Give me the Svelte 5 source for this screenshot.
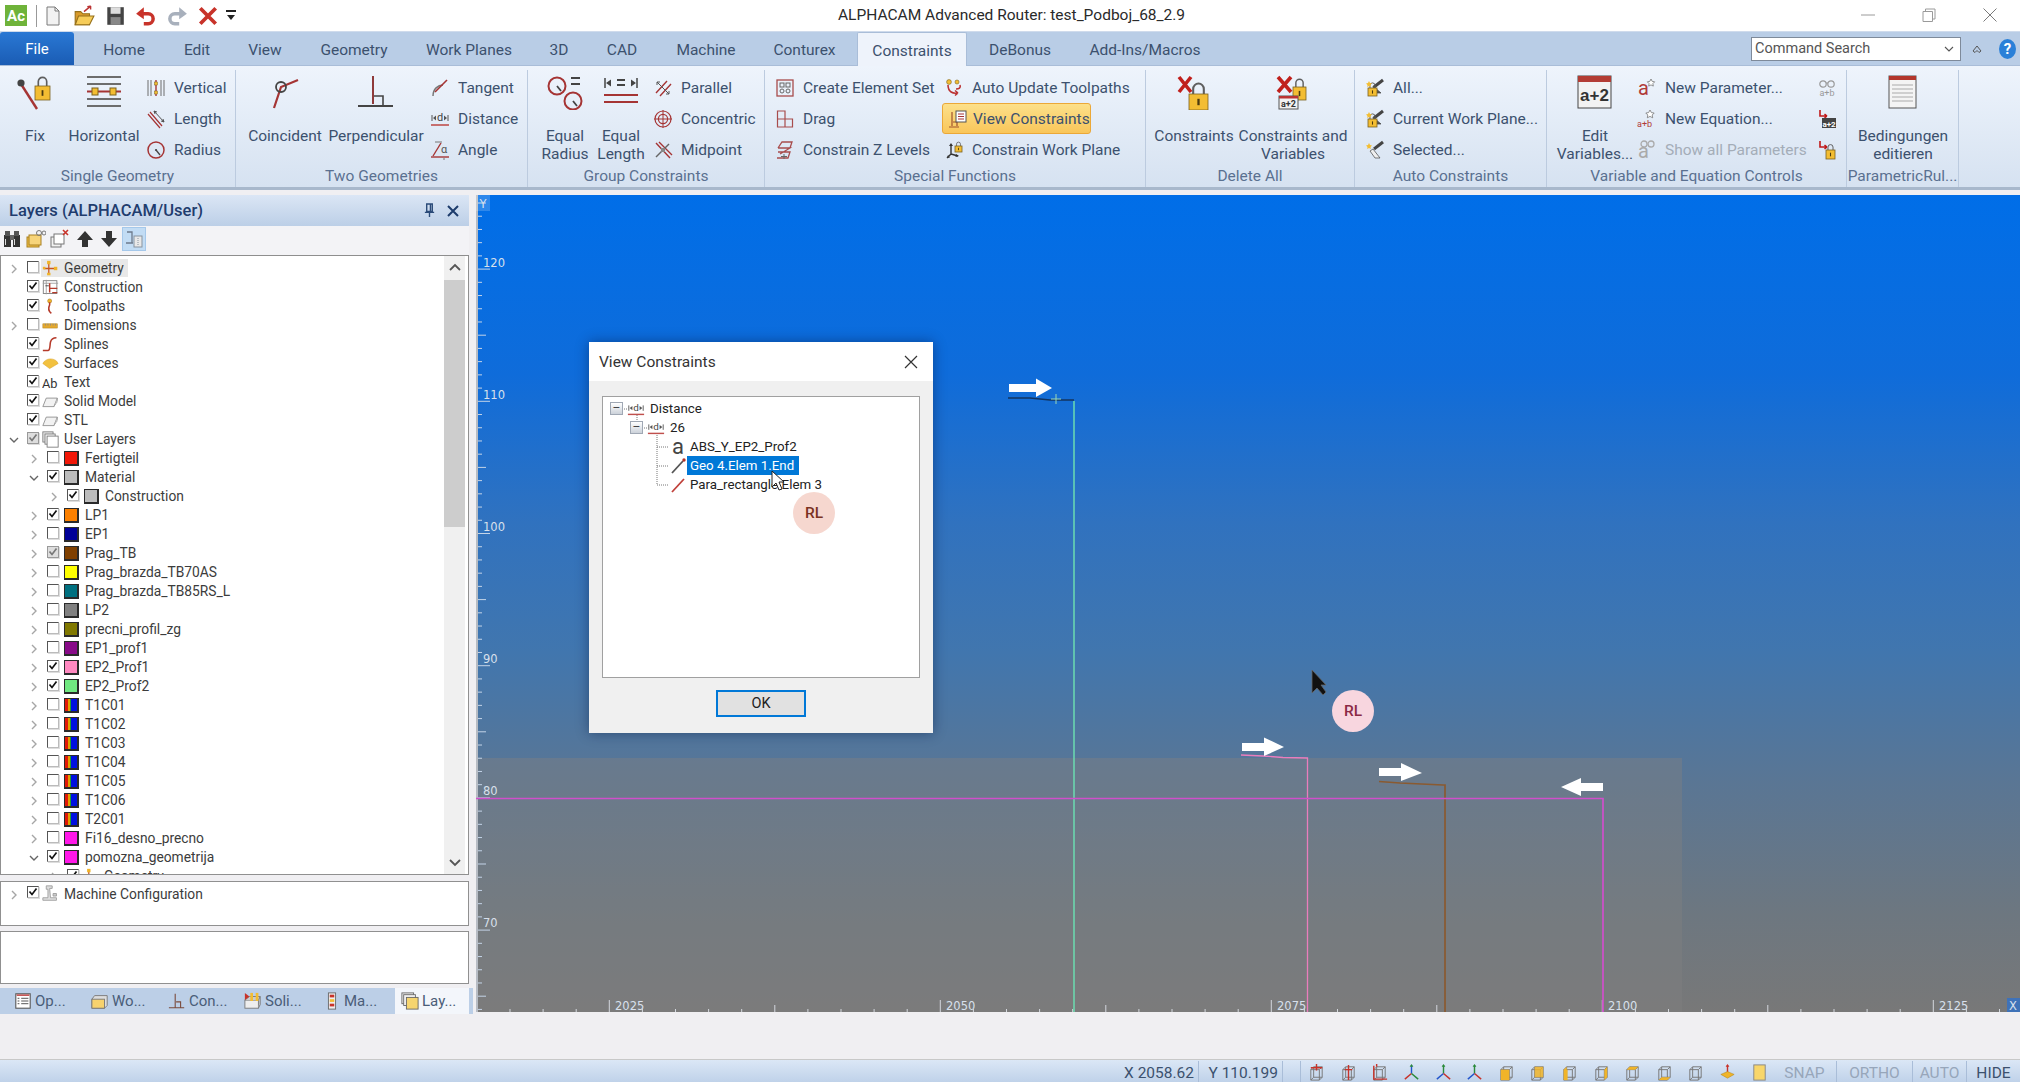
<script>
  const tabs = [
    ['Home',100],['Edit',46],['View',90],['Geometry',88],['Work Planes',142],['3D',38],['CAD',88],
    ['Machine',80],['Conturex',111],['Constraints',110],['DeBonus',106],['Add-Ins/Macros',144]
  ];
  const groups = [
    { label:'Single Geometry', w:236, cols:[
      {big:['Fix'], icon:'fix', w:70},
      {big:['Horizontal'], icon:'horizontal', w:68},
      {small:[['vertical','Vertical'],['length','Length'],['radius','Radius']], w:90}
    ]},
    { label:'Two Geometries', w:292, cols:[
      {big:['Coincident'], icon:'coincident', w:98},
      {big:['Perpendicular'], icon:'perpendicular', w:84},
      {small:[['tangent','Tangent'],['distance','Distance'],['angle','Angle']], w:100, ml:4}
    ]},
    { label:'Group Constraints', w:237, cols:[
      {big:['Equal','Radius'], icon:'eqrad', w:74},
      {big:['Equal','Length'], icon:'eqlen', w:38},
      {small:[['parallel','Parallel'],['concentric','Concentric'],['midpoint','Midpoint']], w:110, ml:5}
    ]},
    { label:'Special Functions', w:381, cols:[
      {small:[['createset','Create Element Set'],['drag','Drag'],['zlevels','Constrain Z Levels']], w:169, ml:2},
      {small:[['autoupd','Auto Update Toolpaths'],['viewcons','View Constraints',1],['workplane','Constrain Work Plane']], w:200}
    ]},
    { label:'Delete All', w:209, cols:[
      {big:['Constraints'], icon:'delc', w:92, ml:2},
      {big:['Constraints and','Variables'], icon:'delcv', w:106}
    ]},
    { label:'Auto Constraints', w:192, cols:[
      {small:[['autoall','All...'],['autocur','Current Work Plane...'],['autosel','Selected...']], w:180, ml:2}
    ]},
    { label:'Variable and Equation Controls', w:300, cols:[
      {big:['Edit','Variables...'], icon:'editvar', w:68, ml:14},
      {small:[['newparam','New Parameter...'],['neweq','New Equation...'],['showpar','Show all Parameters',0,1]], w:180},
      {small:[['sideA',''],['sideB',''],['sideC','']], w:36}
    ]},
    { label:'ParametricRul...', w:112, cols:[
      {big:['Bedingungen','editieren'], icon:'bed', w:112}
    ]}
  ];
  const T = 'rgb', L = (t,lvl,ex,ck,o) => ({t,lvl,ex,ck,...o});
  const layers = [
    L('Geometry',0,'r',0,{ic:'lgeo',hl:1}), L('Construction',0,'',1,{ic:'lcons'}), L('Toolpaths',0,'',1,{ic:'ltool'}),
    L('Dimensions',0,'r',0,{ic:'ldim'}), L('Splines',0,'',1,{ic:'lspl'}), L('Surfaces',0,'',1,{ic:'lsurf'}),
    L('Text',0,'',1,{ic:'ltext'}), L('Solid Model',0,'',1,{ic:'lsolid'}), L('STL',0,'',1,{ic:'lsolid'}),
    L('User Layers',0,'d',2,{ic:'luser'}), L('Fertigteil',1,'r',0,{c:'#f21808'}), L('Material',1,'d',1,{c:'#bcbcbc'}),
    L('Construction',2,'r',1,{c:'#bcbcbc'}), L('LP1',1,'r',1,{c:'#fb8000'}), L('EP1',1,'r',0,{c:'#000098'}),
    L('Prag_TB',1,'r',2,{c:'#804000'}), L('Prag_brazda_TB70AS',1,'r',0,{c:'#ffff00'}), L('Prag_brazda_TB85RS_L',1,'r',0,{c:'#007080'}),
    L('LP2',1,'r',0,{c:'#808080'}), L('precni_profil_zg',1,'r',0,{c:'#807800'}), L('EP1_prof1',1,'r',0,{c:'#880a88'}),
    L('EP2_Prof1',1,'r',1,{c:'#ff88c0'}), L('EP2_Prof2',1,'r',1,{c:'#70e880'}), L('T1C01',1,'r',0,{c:T}),
    L('T1C02',1,'r',0,{c:T}), L('T1C03',1,'r',0,{c:T}), L('T1C04',1,'r',0,{c:T}), L('T1C05',1,'r',0,{c:T}),
    L('T1C06',1,'r',0,{c:T}), L('T2C01',1,'r',0,{c:T}), L('Fi16_desno_precno',1,'r',0,{c:'#ff18e8'}),
    L('pomozna_geometrija',1,'d',1,{c:'#ff18e8'}), L('Geometry',2,'r',1,{ic:'lgeo'})
  ];
  const bottomTabs = [['op','Op...',77],['wo','Wo...',77],['con','Con...',76],['soli','Soli...',79],['ma','Ma...',78],['lay','Lay...',74,1]];
  const statusIcons = ['s1','s2','s3','s4','s5','s6','s7','s8','s9','s10','s11','s12','s13','s14','s15'];
  const yLabels = [[120,269],[110,401],[100,533],[90,665],[80,797],[70,929]];
  const xLabels = [[2025,610],[2050,941],[2075,1272],[2100,1603],[2125,1934]];
  const yTicks = Array.from({length:62},(_,i)=>{ const y=203+i*13.22; const k=Math.round((y-269)/13.22); return {y, k:((k%10)+10)%10}; });
  const xTicks = Array.from({length:47},(_,i)=>{ const x=510+i*33.1; const k=Math.round((x-610)/33.1); return {x, k:((k%10)+10)%10}; });
</script>

{#snippet chev(d)}
  <svg class="chev" viewBox="0 0 10 10" width="10" height="10">
    {#if d==='r'}<path d="M3 1 L7 5 L3 9" fill="none" stroke="#a6a6a6" stroke-width="1.4"/>
    {:else if d==='d'}<path d="M1 3 L5 7 L9 3" fill="none" stroke="#666" stroke-width="1.4"/>{/if}
  </svg>
{/snippet}

{#snippet lock(x,y,w,h)}
  <path d={`M${x+w*.22} ${y} v${-h*.32} a${w*.28} ${w*.28} 0 0 1 ${w*.56} 0 v${h*.32}`} fill="none" stroke="#5e5e5e" stroke-width={w*.11}/>
  <rect x={x} y={y} width={w} height={h} fill="#f3bd32" stroke="#7a6220" stroke-width=".8"/>
  <rect x={x+w*.44} y={y+h*.3} width={w*.12} height={h*.4} fill="#4a3a10"/>
{/snippet}

{#snippet ic(n, s=20, v=20)}
  <svg class="ic" viewBox={`0 0 ${v} ${v}`} width={s} height={s} aria-hidden="true">
    {#if n==='fix'}
      <path d="M4 10 L20 35" stroke="#a53434" stroke-width="2.4"/><circle cx="4" cy="9" r="3.6" fill="#444"/>
      {@render lock(18,12,15,14)}
    {:else if n==='horizontal'}
      <path d="M1 3H35M1 10H35M1 25H35M1 32H35" stroke="#6d6d6d" stroke-width="2"/>
      <path d="M1 17.5H35" stroke="#a53434" stroke-width="2"/>
      <rect x="6" y="14" width="6" height="7" fill="#f3bd32" stroke="#7a6220"/><rect x="24" y="14" width="6" height="7" fill="#f3bd32" stroke="#7a6220"/>
    {:else if n==='coincident'}
      <path d="M7 34 L14 13 L31 6" fill="none" stroke="#a53434" stroke-width="2.2"/><circle cx="14" cy="13" r="5" fill="none" stroke="#444" stroke-width="1.8"/>
    {:else if n==='perpendicular'}
      <path d="M15 2V30" stroke="#8f3a3a" stroke-width="2"/><path d="M0 32H35" stroke="#444" stroke-width="2"/>
      <path d="M16 22H25V31" fill="none" stroke="#444" stroke-width="1.6"/>
    {:else if n==='vertical'}
      <path d="M2 2V18M5 2V18M15 2V18M18 2V18" stroke="#6d6d6d" stroke-width="1"/><path d="M10 2V18" stroke="#a53434" stroke-width="1.4"/>
      <rect x="8.5" y="4" width="3" height="3" fill="#f3bd32" stroke="#7a6220" stroke-width=".5"/><rect x="8.5" y="13" width="3" height="3" fill="#f3bd32" stroke="#7a6220" stroke-width=".5"/>
    {:else if n==='length'}
      <path d="M2 5 L14 19M4 3 L16 17" stroke="#a53434" stroke-width="1.2"/><path d="M8 2 L18 13M8 2 l1 3M8 2 l3 1M18 13 l-3 -1M18 13 l-1 -3" stroke="#555" stroke-width="1" fill="none"/>
    {:else if n==='radius'}
      <circle cx="10" cy="10" r="8" fill="none" stroke="#a53434" stroke-width="1.5"/><path d="M10 10 L14 15" stroke="#444" stroke-width="1.3"/><circle cx="10" cy="10" r="1.1" fill="#444"/>
    {:else if n==='tangent'}
      <path d="M3 18 C3 11 8 7 13 7" fill="none" stroke="#777" stroke-width="1.5"/><path d="M5 14 L17 2" stroke="#a53434" stroke-width="1.6"/>
    {:else if n==='distance'}
      <path d="M2 6V12M18 6V12" stroke="#555"/><path d="M3 9 l3 -2.4v4.8zM17 9 l-3 -2.4v4.8z" fill="#555"/>
      <text x="10" y="12" text-anchor="middle" font-size="11" font-family="Roboto" fill="#444">d</text><path d="M1 16H19" stroke="#c0504d" stroke-width="1.6"/>
    {:else if n==='angle'}
      <path d="M1 17H19" stroke="#a53434" stroke-width="1.4"/><path d="M3 16 L11 3" stroke="#a53434" stroke-width="1.4"/><path d="M5 2H12M14 18v2" stroke="#777"/>
      <text x="14" y="13" text-anchor="middle" font-size="11" font-family="Roboto" fill="#555">α</text>
    {:else if n==='eqrad'}
      <circle cx="10" cy="12" r="8.5" fill="none" stroke="#a53434" stroke-width="2"/><circle cx="26" cy="27" r="8.5" fill="none" stroke="#a53434" stroke-width="2"/>
      <path d="M10 12 L14 17M26 27 L30 32" stroke="#444" stroke-width="1.8"/><path d="M24 4H33M24 10H33" stroke="#444" stroke-width="2.2"/>
    {:else if n==='eqlen'}
      <path d="M2 4V14M34 4V14" stroke="#444" stroke-width="1.5"/><path d="M3 9 l5 -3.6v7.2zM33 9 l-5 -3.6v7.2z" fill="#444"/><path d="M14 6H22M14 11H22" stroke="#444" stroke-width="2"/>
      <path d="M1 21H35M1 28H35" stroke="#a53434" stroke-width="2"/>
    {:else if n==='parallel'}
      <path d="M3 15 L14 3M7 18 L18 6" stroke="#a53434" stroke-width="1.4"/><path d="M4 4 L16 16M4 4l3 0M4 4l0 3M16 16l-3 0M16 16l0 -3" stroke="#555" fill="none"/>
    {:else if n==='concentric'}
      <circle cx="10" cy="10" r="8" fill="none" stroke="#a53434" stroke-width="1.2"/><circle cx="10" cy="10" r="4.6" fill="none" stroke="#a53434" stroke-width="1.2"/><path d="M1 10H19M10 1V19" stroke="#a53434"/>
    {:else if n==='midpoint'}
      <path d="M3 3 L17 18M6 2 L19 15" stroke="#a53434" stroke-width="1.4"/><path d="M3 17 L16 4" stroke="#666" stroke-width="1.4"/><rect x="8" y="8" width="4" height="4" fill="#888"/>
    {:else if n==='createset'}
      <rect x="2" y="2" width="16" height="16" fill="none" stroke="#a84c4c" stroke-width="1.3"/><rect x="5" y="5" width="4" height="4" fill="none" stroke="#666"/><rect x="11" y="5" width="4" height="4" fill="none" stroke="#666"/><circle cx="7" cy="13" r="2" fill="none" stroke="#666"/><circle cx="13" cy="13" r="2" fill="none" stroke="#666"/>
    {:else if n==='drag'}
      <path d="M2.5 10H17.5V18H2.5V2H10V18" fill="none" stroke="#a84c4c" stroke-width="1.2"/>
    {:else if n==='zlevels'}
      <path d="M3 8 L7 2H17L15 8M3 12H15L13 18H2M3 8H15L5 14" fill="none" stroke="#a84c4c" stroke-width="1.3"/><path d="M9 14V19M6 16.500H12" stroke="#666"/>
    {:else if n==='autoupd'}
      <circle cx="5" cy="4" r="2.4" fill="#f3bd32" stroke="#7a6220" stroke-width=".6"/><circle cx="13" cy="4" r="2" fill="#f3bd32" stroke="#7a6220" stroke-width=".6"/><path d="M4 7 C4 14 9 16 14 15M14 15l-3 -2.500M14 15l-3 2.500M16 7 C17 10 15 11 12 11" fill="none" stroke="#b33" stroke-width="1.6"/>
    {:else if n==='viewcons'}
      <path d="M4 3V17M1 18H11M5 13H9V17" fill="none" stroke="#a0522d" stroke-width="1.2"/><rect x="8" y="2" width="10" height="11" fill="#fff" stroke="#555"/><path d="M10 5H16M10 7.500H16M10 10H16" stroke="#a53434"/>
    {:else if n==='workplane'}
      <path d="M7 14 L3 18M7 14 L7 5M7 14 L14 16" stroke="#333" stroke-width="1.4"/><path d="M7 3l-2 3h4zM3 18l3 -.5-2 -2.500zM15 16l-3 -2 -.5 3z" fill="#333"/>{@render lock(11,6,7,6)}
    {:else if n==='delc'}
      <path d="M3 3 L15 18M15 3 L3 18" stroke="#c0201c" stroke-width="3.6"/>{@render lock(13,20,19,16)}
    {:else if n==='delcv'}
      {@render lock(18,13,13,13)}<path d="M3 3 L16 18M16 3 L3 18" stroke="#c0201c" stroke-width="3.6"/>
      <rect x="4" y="22" width="19" height="13" fill="#f2f2f2" stroke="#555"/><rect x="4" y="22" width="19" height="2.500" fill="#b33"/>
      <text x="13.500" y="33" text-anchor="middle" font-size="9" font-family="Roboto" font-weight="700" fill="#333">a+2</text>
    {:else if n==='autoall'||n==='autocur'||n==='autosel'}
      <path d="M9 9 L18 2" stroke="#444" stroke-width="3"/><path d={n==='autosel'?'M8 9 L15 18 L10 18 L5 11z':'M8 8 L16 15 L9 15z'} fill={n==='autosel'?'#eee':'#555'} stroke="#444" stroke-width=".7"/>
      {#if n!=='autosel'}{@render lock(3,10,9,8)}{/if}<path d="M4 3l1 2 2 .5-1.500 1.500.3 2-1.800-1-1.800 1 .3-2L1 5.500 3 5z" fill="#f3bd32"/>
    {:else if n==='editvar'}
      <rect x="1" y="2" width="33" height="32" fill="#f2f2f2" stroke="#444"/><rect x="1" y="2" width="33" height="6" fill="#b33c34"/>
      <text x="17.500" y="27" text-anchor="middle" font-size="17" font-family="Liberation Sans" font-weight="700" fill="#333">a+2</text>
    {:else if n==='newparam'}
      <text x="1" y="17" font-size="20" font-family="Roboto" fill="#b03a38">a</text><path d="M14 1l1.200 2.400 2.500.4-1.800 1.800.4 2.500-2.300-1.200-2.300 1.200.4-2.500-1.800-1.800 2.500-.4z" fill="#fff" stroke="#777" stroke-width=".8"/>
    {:else if n==='neweq'}
      <text x="0" y="18" font-size="9" font-family="Roboto" fill="#b03a38">a+b</text><path d="M13 1l1.400 2.600 2.800.4-2 2 .5 2.800-2.700-1.400-2.700 1.400.5-2.800-2-2 2.800-.4z" fill="#fff" stroke="#777" stroke-width=".8"/>
    {:else if n==='showpar'}
      <text x="1" y="18" font-size="20" font-family="Roboto" fill="#aaa">a</text><circle cx="7" cy="4" r="3" fill="none" stroke="#aaa" stroke-width="1.300"/><circle cx="14" cy="4" r="3" fill="none" stroke="#aaa" stroke-width="1.300"/>
    {:else if n==='sideA'}
      <circle cx="6" cy="6" r="3.200" fill="none" stroke="#999" stroke-width="1.200"/><circle cx="14" cy="6" r="3.200" fill="none" stroke="#999" stroke-width="1.200"/><path d="M9 5H11" stroke="#999"/><text x="10" y="18" text-anchor="middle" font-size="9" font-family="Roboto" fill="#999">a+b</text>
    {:else if n==='sideB'}
      <path d="M3 1V7H10M10 7l-2.500 -2M10 7l-2.500 2" fill="none" stroke="#c01818" stroke-width="1.600"/><rect x="5" y="9" width="14" height="10" fill="#444"/><text x="12" y="17.500" text-anchor="middle" font-size="8" font-family="Roboto" font-weight="700" fill="#fff">a+2</text>
    {:else if n==='sideC'}
      <path d="M3 1V7H10M10 7l-2.500 -2M10 7l-2.500 2" fill="none" stroke="#c01818" stroke-width="1.600"/>{@render lock(9,10,9,9)}
    {:else if n==='bed'}
      <rect x="4" y="2" width="27" height="32" fill="#f4f4f4" stroke="#555"/><rect x="4" y="2" width="27" height="4" fill="#b3362c"/><path d="M7 11H28M7 15H28M7 19H28M7 23H28M7 27H28" stroke="#aaa"/>
    {:else if n==='doc'}
      <path d="M4 1H12L16 5V19H4z" fill="#f2f2f2" stroke="#7a7a7a"/><path d="M12 1V5H16" fill="none" stroke="#7a7a7a"/>
    {:else if n==='open'}
      <path d="M2 18V6H7L9 8H15V18z" fill="#d99a2b" stroke="#96701a"/><path d="M2 18L5 10H19L15 18z" fill="#f6cc59" stroke="#96701a"/><path d="M10 6 L16 1M16 1l-3 .5M16 1l0 3" stroke="#b33" fill="none" stroke-width="1.300"/>
    {:else if n==='save'}
      <rect x="3" y="2" width="15" height="16" fill="#444"/><rect x="6" y="2" width="9" height="6" fill="#ddd"/><rect x="6" y="11" width="9" height="7" fill="#888"/>
    {:else if n==='undo'}
      <path d="M4 8H12A4.500 4.500 0 0 1 12 17H8" fill="none" stroke="#c8332a" stroke-width="3.200"/><path d="M1 8L8 2V13z" fill="#c8332a"/>
    {:else if n==='redo'}
      <path d="M16 8H8A4.500 4.500 0 0 0 8 17H12" fill="none" stroke="#a8b0bc" stroke-width="3.200"/><path d="M19 8L12 2V13z" fill="#a8b0bc"/>
    {:else if n==='del'}
      <path d="M3 3L17 17M17 3L3 17" stroke="#c8332a" stroke-width="3.400"/>
    {:else if n==='bino'}
      <rect x="2" y="6" width="7" height="12" fill="#333"/><rect x="11" y="6" width="7" height="12" fill="#333"/><rect x="3" y="2" width="5" height="5" fill="#555"/><rect x="12" y="2" width="5" height="5" fill="#555"/><rect x="8" y="6" width="4" height="5" fill="#666"/><path d="M3.500 10v6M12.500 10v6" stroke="#ddd"/>
    {:else if n==='ltb2'}
      <rect x="1" y="8" width="12" height="10" fill="#f3c24a" stroke="#a98020"/><rect x="3" y="6" width="12" height="10" fill="#f7d47a" stroke="#a98020"/><circle cx="13" cy="4" r="2.500" fill="none" stroke="#777"/><circle cx="18" cy="4" r="2" fill="none" stroke="#777"/>
    {:else if n==='ltb3'}
      <rect x="1" y="8" width="10" height="10" fill="#f2f2f2" stroke="#777"/><rect x="4" y="5" width="10" height="10" fill="#fff" stroke="#777"/><path d="M13 1L18 6M18 1L13 6" stroke="#c8332a" stroke-width="1.600"/>
    {:else if n==='up'}
      <path d="M10 2L18 11H13V18H7V11H2z" fill="#333"/>
    {:else if n==='down'}
      <path d="M10 18L18 9H13V2H7V9H2z" fill="#333"/>
    {:else if n==='ltb6'}
      <path d="M3 3H8V14M2 14H9" fill="none" stroke="#6d7a8c" stroke-width="1.300"/><rect x="10" y="7" width="8" height="11" fill="#e8e8e8" stroke="#88939f"/><path d="M14 9v7" stroke="#88939f" stroke-dasharray="1 1"/>
    {:else if n==='lgeo'}
      <path d="M2 10H8V3M8 10V17M8 10H17" fill="none" stroke="#c8551f" stroke-width="1.500"/><rect x="1" y="8" width="3" height="3" fill="#f0b429"/><rect x="6" y="1" width="4" height="4" fill="#f0b429"/><rect x="14" y="8" width="4" height="4" fill="#f0b429"/><rect x="6" y="15" width="4" height="3" fill="#f0b429"/>
    {:else if n==='lcons'}
      <rect x="1.500" y="2" width="16" height="15" fill="none" stroke="#777"/><path d="M1 5H19M5 1V18" stroke="#999"/><path d="M9 5V16M9 11H18M12 16H18" stroke="#b53a2a" stroke-width="1.700"/><path d="M4 8H8" stroke="#333"/>
    {:else if n==='ltool'}
      <circle cx="9" cy="3.500" r="2.400" fill="#f0b429" stroke="#a07010" stroke-width=".6"/><path d="M9 5 V8 C7 12 7 15 11 18" fill="none" stroke="#b53a2a" stroke-width="1.800"/>
    {:else if n==='ldim'}
      <rect x="1" y="8" width="17" height="5" fill="#e5a92e" stroke="#b08320" stroke-width=".6"/><path d="M4 8V10M7 8V10M10 8V10M13 8V10M16 8V10" stroke="#888"/>
    {:else if n==='lspl'}
      <path d="M1 17 H7 C10 17 9 11 10 7 C11 3 14 2 17 2" fill="none" stroke="#b53a2a" stroke-width="1.800"/>
    {:else if n==='lsurf'}
      <path d="M1 10 C4 4 12 3 17 7 L19 10 L9 16 z" fill="#f2c13f" stroke="#d9a020" stroke-width=".6"/>
    {:else if n==='ltext'}
      <text x="0" y="16" font-size="15" font-family="Roboto" fill="#333">Ab</text>
    {:else if n==='lsolid'}
      <path d="M1 16 L5 6H18L14 16z" fill="#f2f2f2" stroke="#8a8a8a"/><path d="M18 6V9L14 16" fill="none" stroke="#8a8a8a"/><path d="M14 16 L18 6V11z" fill="#bdbdbd"/>
    {:else if n==='luser'}
      <rect x="1" y="1" width="12" height="12" fill="#e8e8e8" stroke="#777"/><rect x="3.500" y="3.500" width="12" height="12" fill="#f4f4f4" stroke="#777"/><rect x="6" y="6" width="13" height="13" fill="#fff" stroke="#777"/>
    {:else if n==='lmachine'}
      <path d="M1 18H17V15H10L9 4H12V1H5V5H7L7 15H1z" fill="#ddd" stroke="#999"/><path d="M13 10H17V13H13z" fill="#ccc" stroke="#999"/>
    {:else if n==='op'}
      <rect x="2" y="2" width="16" height="16" fill="#fff" stroke="#555" stroke-width="1.200"/><path d="M3 3.500H17" stroke="#b33" stroke-width="1.500"/><path d="M8 7H16M8 10H16M8 13H16M4 7H6M4 10H6M4 13H6" stroke="#444"/>
    {:else if n==='wo'}
      <path d="M1 8 L4 4H18V15L15 18H1z" fill="#ddd" stroke="#777"/><rect x="1" y="8" width="14" height="10" fill="#f7d26d" stroke="#777"/>
    {:else if n==='con'}
      <path d="M8 2V17M1 17.500H18M9 11H14V17" fill="none" stroke="#7a4a3a" stroke-width="1.200"/>
    {:else if n==='soli'}
      <rect x="1" y="9" width="15" height="9" fill="#eee" stroke="#777"/><path d="M1 9L6 5H18L16 9M18 5V14L16 18" fill="#ccc" stroke="#777"/><rect x="7" y="1" width="3" height="9" fill="#f3bd32"/><rect x="13" y="1" width="3" height="9" fill="#f3bd32"/><path d="M1 1l5 4-5 4z" fill="#c8332a"/>
    {:else if n==='ma'}
      <rect x="6" y="1" width="8" height="18" fill="#eee" stroke="#666"/><rect x="7.500" y="3" width="5" height="3" fill="#c8332a"/><rect x="7.500" y="8" width="5" height="3" fill="#f3bd32"/><rect x="7.500" y="13" width="5" height="3" fill="#c8332a"/>
    {:else if n==='lay'}
      <rect x="1" y="1" width="13" height="12" fill="#eee" stroke="#666"/><rect x="3" y="3" width="13" height="12" fill="#f4f4f4" stroke="#666"/><rect x="6" y="6" width="13" height="13" fill="#f6d56f" stroke="#666"/>
    {:else if n==='s1'||n==='s2'||n==='s3'}
      <path d="M4 7H13V18H4zM7 4H16V15H7zM4 7L7 4M13 7L16 4M4 18L7 15M13 18L16 15" fill="none" stroke="#777"/><path d={n==='s1'?'M10 1V8M4 5H16':n==='s2'?'M10 2V18M6 7H14':'M4 3V17H18M7 1V4'} fill="none" stroke="#c8332a" stroke-width="1.500"/>
    {:else if n==='s4'||n==='s5'||n==='s6'}
      <path d="M10 11V2" stroke={n==='s4'?'#2255cc':n==='s5'?'#2a8a3a':'#2a8a3a'} stroke-width="1.500"/><path d="M10 11L3 17" stroke={n==='s4'?'#c8332a':'#2255cc'} stroke-width="1.500"/><path d="M10 11L17 17" stroke={n==='s4'?'#2a8a3a':'#c8332a'} stroke-width="1.500"/><path d="M8 4L10 1L12 4z" fill="#2a8a3a"/>
    {:else if n==='s14'}
      <path d="M10 2V13" stroke="#c8332a" stroke-width="1.500"/><path d="M8 4L10 1L12 4z" fill="#c8332a"/><path d="M3 12L10 9L17 12L10 16z" fill="#f0b429" stroke="#a97f18" stroke-width=".5"/>
    {:else if n==='s15'}
      <rect x="4" y="2" width="12" height="16" fill="#f8d66a" stroke="#888"/>
    {:else}
      <path d="M4 7H13V18H4zM7 4H16V15H7zM4 7L7 4M13 7L16 4M4 18L7 15M13 18L16 15" fill="none" stroke="#777"/>
      {#if n==='s7'}<rect x="4" y="7" width="9" height="11" fill="#f0b429"/>
      {:else if n==='s8'}<rect x="7" y="4" width="9" height="11" fill="#f0b429" opacity=".85"/>
      {:else if n==='s9'}<path d="M4 7L7 4V15L4 18z" fill="#f0b429"/><path d="M4 7H8V18H4z" fill="#f0b429"/>
      {:else if n==='s10'}<path d="M13 7L16 4V15L13 18z" fill="#f0b429"/>
      {:else if n==='s11'}<path d="M4 7L7 4H16L13 7z" fill="#f0b429"/>
      {:else if n==='s12'}<path d="M4 18L7 15H16L13 18z" fill="#f0b429"/>{/if}
    {/if}
  </svg>
{/snippet}

<div class="app">
  <header class="titlebar">
    <div class="qat">
      <span class="logo">Ac</span>
      <span class="qsep"></span>
      <span class="q">{@render ic('doc',20)}</span>
      <span class="q">{@render ic('open',22)}</span>
      <span class="q">{@render ic('save',22)}</span>
      <span class="q">{@render ic('undo',22)}</span>
      <span class="q">{@render ic('redo',22)}</span>
      <span class="q">{@render ic('del',22)}</span>
      <span class="qdrop"></span>
    </div>
    <div class="apptitle">ALPHACAM Advanced Router: test_Podboj_68_2.9</div>
    <div class="winctl">
      <svg viewBox="0 0 14 14" width="14" height="14"><path d="M0 7H14" stroke="#9a9a9a"/></svg>
      <svg viewBox="0 0 14 14" width="14" height="14"><path d="M3.500 3.500V1H13V11H10.500M1 3.500H10.500V13.500H1z" fill="none" stroke="#9a9a9a"/></svg>
      <svg viewBox="0 0 14 14" width="14" height="14"><path d="M0.500 0.500L13.500 13.500M13.500 0.500L0.500 13.500" stroke="#7a7a7a"/></svg>
    </div>
  </header>

  <nav class="tabs">
    <div class="file">File</div>
    {#each tabs as [t,w]}
      <div class="tab" class:active={t==='Constraints'} class:nudge={t==='Conturex'} style:width="{w}px">{t}</div>
    {/each}
    <div class="tabright">
      <div class="search"><span>Command Search</span>
        <svg viewBox="0 0 10 10" width="10" height="10"><path d="M1 3L5 7L9 3" fill="none" stroke="#555" stroke-width="1.100"/></svg>
      </div>
      <svg viewBox="0 0 12 12" width="12" height="12"><path d="M2 8L6 3L10 8L8 9.500L6 7.500L4 9.500z" fill="none" stroke="#555"/></svg>
      <span class="help">?</span>
    </div>
  </nav>

  <section class="ribbon">
    {#each groups as g}
      <div class="group" style:width="{g.w}px">
        <div class="cols">
          {#each g.cols as c}
            {#if c.big}
              <div class="big" style:width="{c.w}px" style:margin-left="{c.ml||0}px">
                <div class="bigicon">{@render ic(c.icon,36,36)}</div>
                {#each c.big as line}<div class="bigline">{line}</div>{/each}
              </div>
            {:else}
              <div class="smallcol" style:width="{c.w}px" style:margin-left="{c.ml||0}px">
                {#each c.small as [icn,t,act,dim]}
                  <div class="small" class:act class:dim>
                    <span class="smallicon">{@render ic(icn)}</span>{#if t}<span>{t}</span>{/if}
                  </div>
                {/each}
              </div>
            {/if}
          {/each}
        </div>
        <div class="glabel">{g.label}</div>
      </div>
    {/each}
  </section>

  <main class="main">
    <aside class="panel">
      <div class="ptitle">
        <span>Layers (ALPHACAM/User)</span>
        <span class="pbtns">
          <svg viewBox="0 0 14 16" width="13" height="15"><path d="M4 1H10V9H4zM2 10H12M7 10V15M8 1V9" fill="none" stroke="#2a4a78" stroke-width="1.500"/></svg>
          <svg viewBox="0 0 12 12" width="12" height="12"><path d="M1 1L11 11M11 1L1 11" stroke="#1d3c6c" stroke-width="2"/></svg>
        </span>
      </div>
      <div class="ptools">
        <span class="pt">{@render ic('bino')}</span><span class="pt">{@render ic('ltb2')}</span><span class="pt">{@render ic('ltb3')}</span>
        <span class="pt">{@render ic('up')}</span><span class="pt">{@render ic('down')}</span><span class="pt hi">{@render ic('ltb6')}</span>
      </div>
      <div class="treebox">
        <div class="tree">
          {#each layers as r}
            <div class="row lvl{r.lvl}">
              <span class="chevcell">{@render chev(r.ex)}</span>
              <span class="ck" class:on={r.ck===1} class:grey={r.ck===2}>
                {#if r.ck}<svg viewBox="0 0 12 12" width="12" height="12"><path d="M2.500 5.500L5 8.500L9.500 2.500" fill="none" stroke={r.ck===2?'#777':'#111'} stroke-width="1.700"/></svg>{/if}
              </span>
              <span class="cell" class:hl={r.hl}>
                {#if r.ic}<span class="licon">{@render ic(r.ic,17)}</span>
                {:else}<span class="swatch" class:rgb={r.c==='rgb'} style:background-color={r.c==='rgb'?null:r.c}></span>{/if}
                <span class="ltext">{r.t}</span>
              </span>
            </div>
          {/each}
        </div>
        <div class="vscroll">
          <svg viewBox="0 0 14 10" width="14" height="10"><path d="M2 7L7 2L12 7" fill="none" stroke="#555" stroke-width="1.800"/></svg>
          <div class="thumb"></div>
          <svg class="sdown" viewBox="0 0 14 10" width="14" height="10"><path d="M2 2L7 7L12 2" fill="none" stroke="#555" stroke-width="1.800"/></svg>
        </div>
      </div>
      <div class="machbox">
        <div class="row lvl0">
          <span class="chevcell">{@render chev('r')}</span>
          <span class="ck on"><svg viewBox="0 0 12 12" width="12" height="12"><path d="M2.500 5.500L5 8.500L9.500 2.500" fill="none" stroke="#111" stroke-width="1.700"/></svg></span>
          <span class="cell"><span class="licon">{@render ic('lmachine',17)}</span><span class="ltext">Machine Configuration</span></span>
        </div>
      </div>
      <div class="blankbox"></div>
      <div class="ptabs">
        {#each bottomTabs as [icn,t,w,act]}
          <div class="ptab" class:act style:width="{w}px"><span class="pticon">{@render ic(icn,18)}</span>{t}</div>
        {/each}
      </div>
    </aside>

    <div class="canvas">
      <svg class="draw" viewBox="476 195 1544 817" width="1544" height="817">
        <rect x="476" y="758" width="1206" height="254" fill="#808080" fill-opacity=".42"/>
        <rect x="476" y="195" width="2" height="817" fill="#b7bcc4"/>
        {#each yTicks as t}
          <path d={`M478 ${t.y}H${t.k===0?490:t.k===5?486:482}`} stroke="#c4d4e8" stroke-width="1"/>
        {/each}
        {#each yLabels as [v,y]}
          <text x="483" y={y-2} class="rul">{v}</text>
        {/each}
        {#each xTicks as t}
          <path d={`M${t.x} 1012V${t.k===0?1000:t.k===5?1005:1009}`} stroke="#d4d8de" stroke-width="1"/>
        {/each}
        {#each xLabels as [v,x]}
          <text x={x+5} y="1010" class="rul">{v}</text>
        {/each}
        <rect x="476" y="195" width="14" height="16" fill="#fff" fill-opacity=".18"/>
        <text x="483" y="208" text-anchor="middle" class="rul">Y</text>
        <rect x="2007" y="998" width="13" height="14" fill="#3f72b8"/>
        <text x="2013" y="1010" text-anchor="middle" class="rul">X</text>

        <path d="M1008 398H1030L1050 400H1074" fill="none" stroke="#13345f" stroke-width="1.500"/>
        <path d="M1074 401V1012" stroke="#6bdcb0" stroke-width="1.500"/>
        <path d="M1056 394V404M1051 399H1061" stroke="#9ad7b4"/>
        <path d="M1241 755L1263 756L1283 757.500L1307.500 758V1012" fill="none" stroke="#ea7dbd" stroke-width="1.300"/>
        <path d="M1379 781.500L1400 783L1443 785H1445V1012" fill="none" stroke="#8a5a30" stroke-width="1.700"/>
        <path d="M476 798.500H1603V1012" fill="none" stroke="#d04fcb" stroke-width="1.700"/>
        <path d="M1009 384H1036V378.500L1052 388L1036 397V392H1009z" fill="#fff"/>
        <path d="M1242 743H1264V737.500L1284 747L1264 756V751H1242z" fill="#fff"/>
        <path d="M1379 768H1401V763L1422 773L1401 781V776H1379z" fill="#fff"/>
        <path d="M1603 783H1581V778L1561 787L1581 796V791H1603z" fill="#fff"/>
        <path d="M1312 670V693L1317 688L1323 695L1326 692L1321 685H1326z" fill="#111" stroke="#666" stroke-width=".8"/>
      </svg>
      <div class="badge pink">RL</div>
    </div>
  </main>

  <footer class="status">
    <span class="st" style:width="1199px">X 2058.62</span>
    <span class="st" style:width="84px">Y 110.199</span>
    <span class="stgap"></span>
    <span class="sticons">{#each statusIcons as s}<span class="sti">{@render ic(s,19)}</span>{/each}</span>
    <span class="stb dim" style:width="64px">SNAP</span>
    <span class="stb dim" style:width="76px">ORTHO</span>
    <span class="stb dim" style:width="54px">AUTO</span>
    <span class="stb">HIDE</span>
  </footer>

  <div class="dialog">
    <div class="dtitle"><span>View Constraints</span>
      <svg viewBox="0 0 14 14" width="14" height="14"><path d="M1 1L13 13M13 1L1 13" stroke="#333" stroke-width="1.200"/></svg>
    </div>
    <div class="dbody">
      <div class="dtree">
        <svg class="dots" viewBox="0 0 314 280" width="314" height="280">
          <path d="M21 12H25M41 31H45M54 50H66M54 69H66M54 88H66M54 38V88M34 18V24" fill="none" stroke="#777" stroke-dasharray="1 1"/>
        </svg>
        <div class="drow d0"><span class="box">–</span><span class="dic">{@render ic('distance',18)}</span><span class="dt">Distance</span></div>
        <div class="drow d1"><span class="box">–</span><span class="dic">{@render ic('distance',18)}</span><span class="dt">26</span></div>
        <div class="drow d2"><span class="dic2 a">a</span><span class="dt">ABS_Y_EP2_Prof2</span></div>
        <div class="drow d2"><span class="dic2"><svg viewBox="0 0 16 16" width="16" height="16"><path d="M2 15L13 3" stroke="#555" stroke-width="1.800"/><circle cx="14" cy="2" r="1.700" fill="#b3332a"/></svg></span><span class="dt sel">Geo 4.Elem 1.End</span></div>
        <div class="drow d2"><span class="dic2"><svg viewBox="0 0 16 16" width="16" height="16"><path d="M2 15L14 2" stroke="#c0403a" stroke-width="1.800"/></svg></span><span class="dt">Para_rectangle.Elem 3</span></div>
      </div>
      <button class="ok">OK</button>
    </div>
  </div>
  <svg class="cur" viewBox="0 0 14 22" width="14" height="22"><path d="M1 1V17L5 13L8 20L11 19L8 12H13z" fill="#fff" stroke="#222"/></svg>
  <div class="badge peach">RL</div>
</div>

<style>
  :global(body){margin:0;background:#f0eff2}
  .app{position:relative;width:2020px;height:1082px;overflow:hidden;display:flex;flex-direction:column;font-family:Roboto,"Liberation Sans",sans-serif;font-size:15px;color:#333;background:#f0eff2}
  .titlebar{height:31px;flex:none;background:#fff;display:flex;align-items:center;position:relative}
  .qat{display:flex;align-items:center;padding-left:5px;width:833px;flex:none;box-sizing:content-box}
  .logo{width:22px;height:21px;background:#6fb33a;color:#fff;font-weight:700;font-size:15px;display:flex;align-items:center;justify-content:center;margin-right:9px}
  .qsep{width:1px;height:22px;background:#999}
  .q{width:31px;height:24px;display:flex;align-items:center;justify-content:center}
  .qdrop{width:10px;height:9px;margin-left:3px;border-top:2px solid #222;position:relative}
  .qdrop::after{content:"";position:absolute;left:1px;top:3px;border:4px solid transparent;border-top:5px solid #222;border-bottom:0}
  .apptitle{font-size:15.500px;color:#2a2a2a;white-space:nowrap;width:345px;margin-bottom:2px}
  .winctl{margin-left:auto;display:flex;gap:47px;padding-right:23px;align-items:center;margin-bottom:2px}

  .tabs{height:35px;flex:none;display:flex;align-items:stretch;background:#b9cde6;box-sizing:border-box;border-bottom:1px solid #a9bdd8;border-top:1px solid #cfdbec}
  .file{width:74px;background:linear-gradient(#2a78d4,#1a5cb4);color:#fff;display:flex;align-items:center;justify-content:center;border-radius:3px 3px 0 0;box-sizing:border-box;font-size:15px}
  .tab{display:flex;align-items:center;justify-content:center;white-space:nowrap;color:#3c516e;font-size:15.500px;padding-top:2px;box-sizing:border-box}
  .tab.nudge{padding-left:6px}
  .tab.active{background:#eef3fb;border-radius:2px 2px 0 0;border:1px solid #a9bdd8;border-bottom:0;margin-bottom:-1px;position:relative;z-index:1}
  .tabright{margin-left:auto;display:flex;align-items:center;padding-right:4px;gap:0}
  .search{width:210px;height:24px;box-sizing:border-box;background:#fff;border:1px solid #7e8a9a;display:flex;align-items:center;justify-content:space-between;padding:0 6px 0 3px;font-size:14.500px;color:#555;margin-right:10px}
  .tabright>svg{margin-right:16px}
  .help{width:17px;height:20px;border-radius:50%;background:#2a80d8;color:#fff;font-weight:700;font-size:15px;display:flex;align-items:center;justify-content:center}

  .ribbon{height:124px;flex:none;box-sizing:border-box;padding-top:4px;display:flex;background:linear-gradient(#eef4fc,#d6e2f1);border-bottom:3px solid #a8b8cc}
  .group{height:117px;flex:none;box-sizing:border-box;border-right:1px solid #bccbdf;display:flex;flex-direction:column}
  .cols{height:96px;display:flex;flex:none}
  .big{display:flex;flex-direction:column;align-items:center;flex:none}
  .bigicon{height:57px;flex:none;box-sizing:border-box;padding-top:4px}
  .bigline{height:18px;line-height:18px;white-space:nowrap;color:#3c516e;font-size:15.500px}
  .smallcol{display:flex;flex-direction:column;flex:none;padding-top:2px}
  .small{height:31px;display:flex;align-items:center;white-space:nowrap;color:#3c516e;font-size:15.500px;box-sizing:border-box}
  .smallicon{width:36px;display:flex;justify-content:center;flex:none}
  .small.act{background:linear-gradient(#fce08a,#f9c65a);border:1px solid #eba838;border-radius:3px;width:149px;margin-left:6px}
  .small.act .smallicon{width:30px;margin-right:0}
  .small.dim{color:#a4adb8}
  .glabel{height:21px;line-height:21px;text-align:center;color:#5a7090;font-size:15.500px;white-space:nowrap;overflow:hidden}

  .main{display:flex;height:867px;flex:none}
  .panel{width:469px;flex:none;padding-top:5px;display:flex;flex-direction:column;background:#f0eff2}
  .ptitle{height:31px;box-sizing:border-box;background:linear-gradient(#dbe6f5,#bccfe7);display:flex;align-items:center;justify-content:space-between;padding:0 10px 0 9px;font-weight:500;font-size:16.500px;color:#1f3c6e}
  .pbtns{display:flex;gap:11px;align-items:center}
  .ptools{height:30px;display:flex;align-items:center;background:#f3f3f6;box-sizing:border-box;border-bottom:1.500px solid #8e8e8e;padding-bottom:4px}
  .pt{width:24.200px;height:24px;display:flex;align-items:center;justify-content:center}
  .pt.hi{background:#c2dcf4;border:1px solid #a5c8ea;box-sizing:border-box;margin-left:1px}
  .treebox{height:619px;flex:none;display:flex;background:#fff;border-left:1px solid #909090;border-right:1px solid #909090;border-bottom:1.500px solid #909090;box-sizing:border-box}
  .tree{flex:1;overflow:hidden;padding-top:2.500px;min-width:0}
  .row{height:19px;display:flex;align-items:center;flex:none}
  .lvl1{padding-left:20px}.lvl2{padding-left:40px}
  .chevcell{width:26px;display:flex;justify-content:center;flex:none}
  .chev{margin-top:2px}
  .ck{width:12px;height:12px;box-sizing:border-box;flex:none;background:#fff;border:1px solid;border-color:#555 #bbb #bbb #555;margin-bottom:3px;position:relative;box-shadow:1px 1px 0 #ddd;margin-right:2px}
  .ck svg{position:absolute;left:-1px;top:-1px}
  .ck.grey{background:#ddd;border-color:#999}
  .cell{display:flex;align-items:center;height:18px;padding-left:1px}
  .licon{width:17px;height:17px;margin-right:5px;flex:none;display:flex}
  .swatch{width:15px;height:15px;box-sizing:border-box;border:1px solid #2a2a2a;border-width:1px 2px 2px 1px;margin:0 6px 0 2px;flex:none}
  .rgb{background:linear-gradient(90deg,#e01808 0 28%,#e0a000 28% 38%,#1aa030 38% 50%,#0010e0 50%)}
  .ltext{white-space:nowrap;color:#3c3c3c;font-size:13.800px;line-height:18px}
  .hl{background:#e8e8e8;padding-right:4px}
  .vscroll{width:21px;flex:none;background:#f0f0f0;margin-right:3px;position:relative;display:flex;flex-direction:column;align-items:center;padding-top:7px;box-sizing:border-box}
  .thumb{position:absolute;left:0;right:0;top:24px;height:247px;background:#cdcdcd}
  .sdown{position:absolute;bottom:6px}
  .machbox{height:45px;margin-top:6px;background:#fff;border:1px solid #909090;box-sizing:border-box;padding-top:2px}
  .blankbox{height:53px;margin-top:5px;background:#fff;border:1px solid #909090;box-sizing:border-box}
  .ptabs{height:26px;margin-top:4px;display:flex;background:#bccfe7;padding-left:8px;margin-right:-4px}
  .ptab{display:flex;align-items:center;color:#4a5d78;font-size:15px;flex:none;box-sizing:border-box;white-space:nowrap}
  .pticon{display:flex;margin:0 3px 0 6px}
  .ptab.act{background:#f3f6fb}

  .canvas{position:relative;margin:5px 0 0 7px;width:1544px;height:817px;flex:none;background:linear-gradient(#006ee8 0%,#0f6cda 22%,#3072bf 40%,#4176ae 56%,#5a7694 72%,#6d7780 88%,#787878 100%)}
  .draw{display:block;position:absolute;left:0;top:0}
  .rul{font-size:11.500px;fill:#d8e0ec;font-family:"DejaVu Sans",sans-serif}
  .badge{position:absolute;width:42px;height:42px;border-radius:50%;display:flex;align-items:center;justify-content:center;font-size:15.500px;font-weight:500}
  .pink{left:856px;top:495px;background:#f8d6df;color:#8b2a45}
  .peach{left:793px;top:492px;background:#f6d7cf;color:#7a3222}

  .status{height:25px;flex:none;margin-top:2px;display:flex;align-items:center;background:linear-gradient(#dbe7f6,#bdd0e8);border-top:1px solid #c8c8c8;box-sizing:border-box;font-size:15.500px;color:#3c516e;white-space:nowrap;padding-top:1px}
  .st{height:100%;display:flex;align-items:center;justify-content:flex-end;padding-right:4px;box-sizing:border-box;border-right:1px solid #a9bdd8;flex:none}
  .stgap{width:17px;height:100%;border-right:1px solid #a9bdd8;flex:none}
  .sticons{display:flex;width:472px;padding-left:0;box-sizing:border-box;flex:none}
  .sti{width:31.600px;display:flex;justify-content:center;flex:none}
  .stb{height:100%;display:flex;align-items:center;justify-content:center;border-right:1px solid #a9bdd8;box-sizing:border-box;flex:none;width:54px}
  .dim{color:#97a6ba}

  .dialog{position:absolute;left:589px;top:342px;width:344px;height:391px;background:#f0f0f0;box-shadow:0 0 12px rgba(0,20,60,.45);display:flex;flex-direction:column}
  .dtitle{height:39px;background:#fff;flex:none;display:flex;align-items:center;justify-content:space-between;padding:0 15px 0 10px;font-size:15.500px;color:#333}
  .dbody{flex:1;position:relative;padding:15px 13px 0}
  .dtree{position:relative;height:282px;box-sizing:border-box;background:#fff;border:1.500px solid #a0a0a0;padding-top:2px;font-size:13.300px;color:#222}
  .dots{position:absolute;left:0;top:0}
  .drow{height:19px;display:flex;align-items:center;white-space:nowrap;position:relative}
  .d0{padding-left:7px}.d1{padding-left:27px}.d2{padding-left:66px}
  .box{width:11px;height:11px;border:1px solid #a0a8b4;background:linear-gradient(#fff,#ccd2da);display:flex;align-items:center;justify-content:center;font-size:12px;line-height:11px;color:#444;flex:none}
  .dic{margin-left:4px;margin-right:2px;display:flex}
  .dic2{width:18px;flex:none;display:flex;justify-content:center;margin-right:0}
  .a{font-size:22px;line-height:18px;color:#444}
  .dt{padding:0 3px;line-height:19px}
  .sel{background:#0078d7;color:#fff;padding-right:5px}
  .ok{position:absolute;left:127px;top:309px;width:90px;height:27px;background:#e1e1e1;border:2px solid #0078d7;font-family:inherit;font-size:14.500px;color:#222;padding:0}
  .cur{position:absolute;left:771px;top:470px}
</style>
